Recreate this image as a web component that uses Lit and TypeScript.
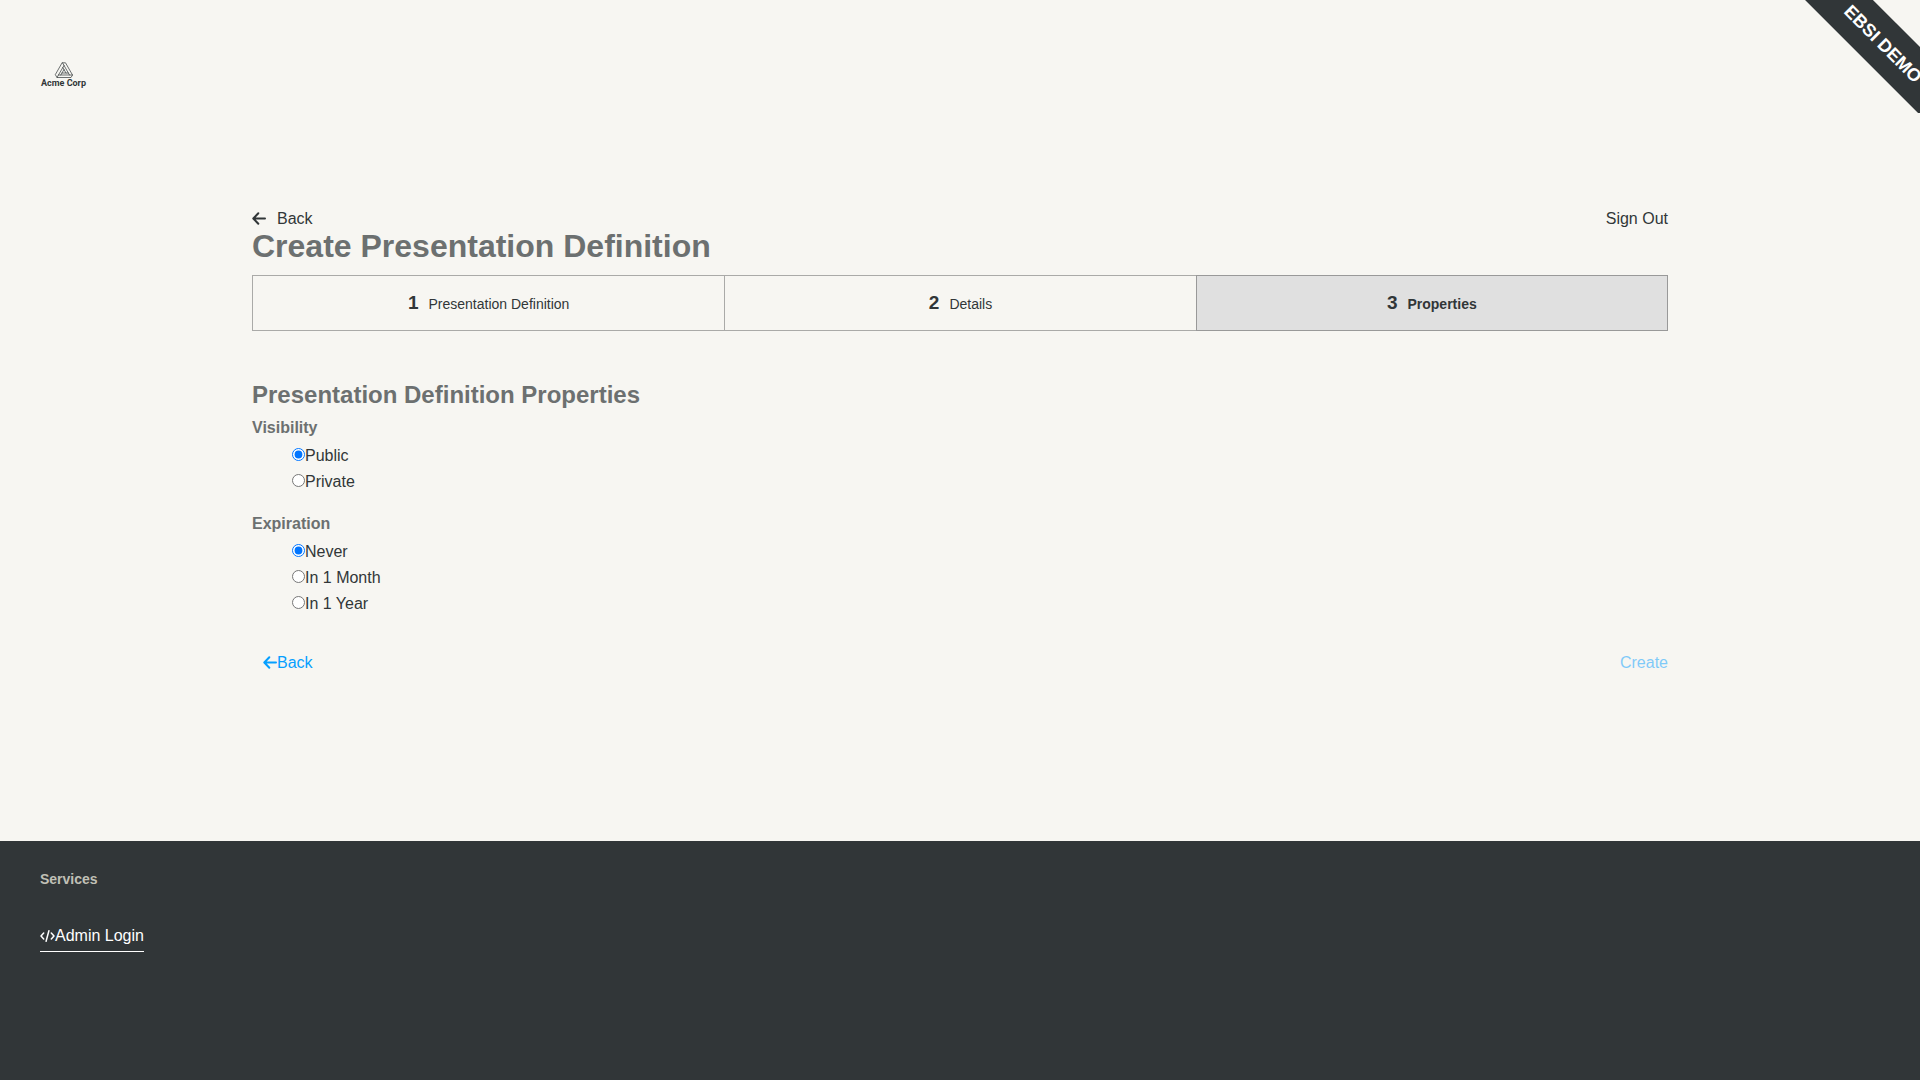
import { LitElement, html, css } from "lit";
import { customElement, state } from "lit/decorators.js";

const arrowLeft = html`<svg class="arrow" viewBox="0 0 14 14" aria-hidden="true">
  <path d="M6.300 1.300 1.300 6.500l5 5.200M1.800 6.500H13" />
</svg>`;

const codeIcon = html`<svg class="code" viewBox="0 0 15 12" aria-hidden="true">
  <path d="M3.700 3 1 6l2.700 3M11.300 3 14 6l-2.700 3M8.900 .8 6.100 11.200" />
</svg>`;

const triangleMark = html`<svg class="mark" viewBox="-2 0 20 16" aria-hidden="true">
  <path
    d="M7.500 .8h3l7 12.200-1.500 2.500H2L.5 13zM7.500 .8 14.500 13M17.500 13H3.500M2 15.500 9 3.500M7.800 5.500 11 11M13.300 11H7M9 7.500 5.800 13"
  />
</svg>`;

const steps = ["Presentation Definition", "Details", "Properties"];
const currentStep = 2;

@customElement("app-root")
export class AppRoot extends LitElement {
  @state() private visibility = "Public";
  @state() private expiration = "Never";

  static styles = css`
    :host {
      display: flex;
      flex-direction: column;
      min-height: 100vh;
      position: relative;
      background: #f7f6f2;
      color: #313638;
      font: 16px/20px "Liberation Sans", Arial, sans-serif;
    }
    * {
      box-sizing: border-box;
    }
    h1,
    h2,
    h3,
    ol,
    fieldset {
      margin: 0;
      padding: 0;
      border: 0;
    }
    a {
      color: inherit;
      text-decoration: none;
    }
    button {
      font: inherit;
      color: #069fff;
      background: none;
      border: 0;
      padding: 0;
      display: flex;
      align-items: center;
      cursor: pointer;
    }
    button:disabled {
      opacity: 0.5;
      cursor: default;
    }
    svg {
      fill: none;
      stroke: currentColor;
      stroke-linecap: round;
      stroke-linejoin: round;
    }
    .arrow {
      width: 14px;
      height: 14px;
      stroke-width: 2;
    }
    .code {
      width: 15px;
      height: 12px;
      stroke-width: 1.5;
    }
    .corner {
      position: absolute;
      top: 0;
      right: 0;
      width: 160px;
      height: 113px;
      overflow: hidden;
    }
    .ribbon {
      position: absolute;
      top: 20px;
      right: -83px;
      width: 240px;
      transform: rotate(45deg);
      background: #313638;
      color: #fff;
      font-size: 18px;
      font-weight: 700;
      line-height: 48px;
      text-align: center;
    }
    .masthead {
      padding: 62px 40px 121px;
      display: flex;
    }
    .logo {
      display: flex;
      flex-direction: column;
      align-items: center;
      padding: 0 1px;
      font: 700 9px/10px Roboto, sans-serif;
    }
    .mark {
      width: 20px;
      height: 16px;
      stroke-width: 0.7;
    }
    main {
      flex: 1;
      width: 100%;
      max-width: 1496px;
      margin: 0 auto;
      padding: 0 40px;
    }
    .bar {
      display: flex;
      justify-content: space-between;
      align-items: center;
    }
    .crumb {
      display: flex;
      align-items: center;
      gap: 11px;
    }
    h1 {
      font-size: 32px;
      line-height: 34px;
      color: #6c7070;
    }
    .steps {
      display: grid;
      grid-template-columns: repeat(3, 1fr);
      list-style: none;
      margin: 12px 0 46px;
      border: 1px solid #aaaaa8;
    }
    .step {
      display: flex;
      justify-content: center;
      align-items: baseline;
      gap: 10px;
      padding: 15px 0 14px;
      font-size: 14px;
      line-height: 24px;
    }
    .step + .step {
      border-left: 1px solid #aaaaa8;
    }
    .number {
      font-size: 19px;
      font-weight: 700;
    }
    .step.current {
      background: #e0e0e0;
      font-weight: 700;
      margin: -1px;
      margin-left: 0;
      border: 1px solid #999;
    }
    h2 {
      font-size: 24px;
      line-height: 36px;
      color: #6c7070;
    }
    legend {
      padding: 0;
      font-weight: 700;
      color: #6c7070;
      line-height: 30px;
    }
    .group {
      padding-bottom: 14px;
    }
    .choice {
      display: flex;
      align-items: center;
      margin-left: 40px;
      height: 26px;
    }
    .choice input {
      margin: 0 0 3px;
      width: 13px;
      height: 13px;
    }
    .actions {
      padding: 22px 0 0 11px;
    }
    footer {
      background: #313638;
      color: #fff;
      padding: 28px 40px 128px;
      display: flex;
      flex-direction: column;
      align-items: flex-start;
      gap: 36px;
    }
    footer h3 {
      font-size: 14px;
      line-height: 20px;
      color: #c0c0b6;
    }
    .login {
      display: flex;
      align-items: center;
      line-height: 22px;
      padding-bottom: 4px;
      border-bottom: 1px solid #fff;
    }
  `;

  private group(legend: string, name: string, options: string[], value: string, pick: (v: string) => void) {
    return html`<fieldset class="group">
      <legend>${legend}</legend>
      ${options.map(
        (o, i) => html`<div class="choice">
          <input type="radio" id="${name}-${i}" name=${name} .checked=${o === value} @change=${() => pick(o)} />
          <label for="${name}-${i}">${o}</label>
        </div>`
      )}
    </fieldset>`;
  }

  render() {
    return html`
      <header class="masthead">
        <a class="logo" href="#">${triangleMark}<span>Acme Corp</span></a>
      </header>
      <div class="corner"><div class="ribbon">EBSI DEMO</div></div>
      <main>
        <nav class="bar">
          <a class="crumb" href="#">${arrowLeft}<span>Back</span></a>
          <a href="#">Sign Out</a>
        </nav>
        <h1>Create Presentation Definition</h1>
        <ol class="steps">
          ${steps.map(
            (s, i) => html`<li class="step ${i === currentStep ? "current" : ""}">
              <span class="number">${i + 1}</span><span>${s}</span>
            </li>`
          )}
        </ol>
        <form @submit=${(e: Event) => e.preventDefault()}>
          <h2>Presentation Definition Properties</h2>
          ${this.group("Visibility", "visibility", ["Public", "Private"], this.visibility, (v) => (this.visibility = v))}
          ${this.group("Expiration", "expiration", ["Never", "In 1 Month", "In 1 Year"], this.expiration, (v) => (this.expiration = v))}
          <div class="bar actions">
            <button type="button">${arrowLeft}<span>Back</span></button>
            <button type="submit" disabled>Create</button>
          </div>
        </form>
      </main>
      <footer>
        <h3>Services</h3>
        <a class="login" href="#">${codeIcon}<span>Admin Login</span></a>
      </footer>
    `;
  }
}
